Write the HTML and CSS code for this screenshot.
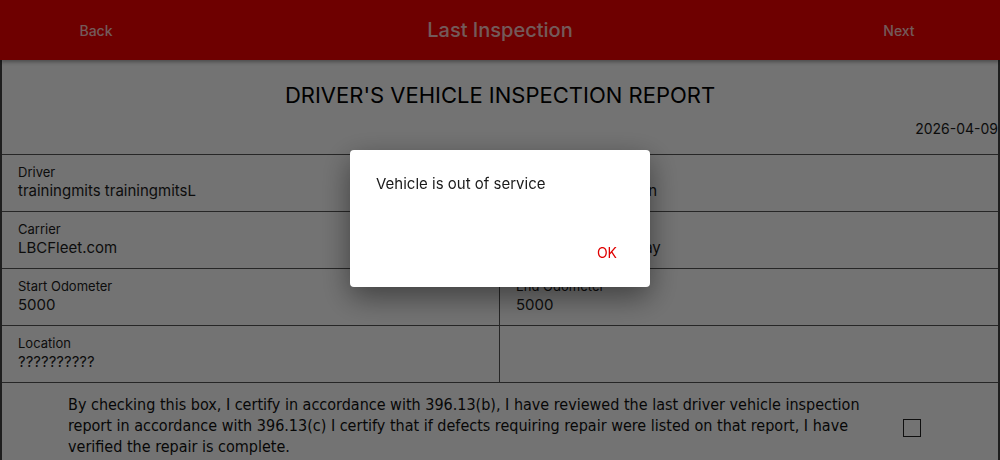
FILE: index.html
```html
<!DOCTYPE html>
<html lang="en">
<head>
    <meta charset="UTF-8">
    <meta name="viewport" content="width=device-width, initial-scale=1.0">
    <title>Last Inspection</title>
    <link rel="stylesheet" href="styles.css">
</head>
<body>
    <div class="top-bar">
        <span class="top-link">Back</span>
        <span class="top-title">Last Inspection</span>
        <span class="top-link top-next">Next</span>
    </div>

    <div class="page">
        <h1 class="report-title">DRIVER'S VEHICLE INSPECTION REPORT</h1>
        <div class="report-date">2026-04-09</div>

        <div class="info-grid">
            <div class="info-cell">
                <div class="info-label">Driver</div>
                <div class="info-value">trainingmits trainingmitsL</div>
            </div>
            <div class="info-cell">
                <div class="info-label">Inspection Type</div>
                <div class="info-value">Post Trip Inspection</div>
            </div>
            <div class="info-cell">
                <div class="info-label">Carrier</div>
                <div class="info-value">LBCFleet.com</div>
            </div>
            <div class="info-cell">
                <div class="info-label">Vehicle</div>
                <div class="info-value">Training Vehicle Day</div>
            </div>
            <div class="info-cell">
                <div class="info-label">Start Odometer</div>
                <div class="info-value">5000</div>
            </div>
            <div class="info-cell">
                <div class="info-label">End Odometer</div>
                <div class="info-value">5000</div>
            </div>
            <div class="info-cell">
                <div class="info-label">Location</div>
                <div class="info-value">??????????</div>
            </div>
            <div class="info-cell"></div>
        </div>

        <div class="certify-row">
            <p class="certify-text">By checking this box, I certify in accordance with 396.13(b), I have reviewed the last driver vehicle inspection report in accordance with 396.13(c) I certify that if defects requiring repair were listed on that report, I have verified the repair is complete.</p>
            <span class="check-box"></span>
        </div>
    </div>

    <div class="modal">
        <div class="modal-content">
            <p class="modal-text">Vehicle is out of service</p>
            <div class="modal-actions">
                <button class="button-ok">OK</button>
            </div>
        </div>
    </div>
</body>
</html>
```

FILE: styles.css
```css
body {
    margin: 0;
    font-family: Inter, "Noto Sans", sans-serif;
    background-color: #ffffff;
    color: #1c1c1c;
    height: 460px;
    overflow: hidden;
}

.top-bar {
    height: 60px;
    background-color: #f40000;
    display: flex;
    align-items: center;
    justify-content: space-between;
    box-shadow: 0 2px 4px rgba(0,0,0,0.35);
    position: relative;
    z-index: 1;
}
.top-link {
    width: 192px;
    text-align: center;
    color: #ffc8c8;
    font-size: 14px;
    font-weight: 500;
}
.top-next {
    width: 202px;
}
.top-title {
    color: #ffc8c8;
    font-size: 20px;
    font-weight: 500;
    margin-left: 10px;
}

.page {
    border-left: 2px solid #444;
    border-right: 2px solid #444;
    min-height: 400px;
}
.report-title {
    margin: 0;
    padding-top: 22px;
    text-align: center;
    font-size: 22px;
    font-weight: 400;
    color: #000;
}
.report-date {
    text-align: right;
    font-size: 14px;
    margin-top: 12px;
    height: 34px;
}

.info-grid {
    display: grid;
    grid-template-columns: 1fr 1fr;
    border-top: 1px solid #555;
}
.info-cell {
    height: 57px;
    border-bottom: 1px solid #555;
    padding: 9px 16px 0;
    box-sizing: border-box;
}
.info-cell:nth-child(odd) {
    border-right: 1px solid #555;
}
.info-label {
    font-size: 13px;
    line-height: 17px;
}
.info-value {
    font-size: 15px;
    line-height: 20px;
}

.certify-row {
    display: flex;
    align-items: center;
    padding: 11px 0 0 66px;
}
.certify-text {
    margin: 0;
    width: 810px;
    font-family: "Liberation Sans Narrow", "DejaVu Sans Condensed", sans-serif;
    font-size: 16px;
    line-height: 21px;
    color: #111;
}
.check-box {
    width: 16px;
    height: 16px;
    border: 1.5px solid #222;
    margin-left: 25px;
    margin-top: 4px;
}

.modal {
    position: fixed;
    z-index: 10;
    left: 0; top: 0; width: 100%; height: 100%;
    background-color: rgba(0,0,0,0.55);
}
.modal-content {
    position: absolute;
    left: 350px;
    top: 150px;
    width: 300px;
    height: 137px;
    background-color: #fff;
    border-radius: 4px;
    box-shadow: 0 10px 30px rgba(0,0,0,0.45);
    padding: 24px 26px 0;
    box-sizing: border-box;
}
.modal-text {
    margin: 0;
    font-size: 15px;
    color: #1a1a1a;
}
.modal-actions {
    text-align: right;
    margin-top: 49px;
    padding-right: 7px;
}
.button-ok {
    border: none;
    background: none;
    color: #e00000;
    font-family: inherit;
    font-size: 14px;
    padding: 0;
}
```
